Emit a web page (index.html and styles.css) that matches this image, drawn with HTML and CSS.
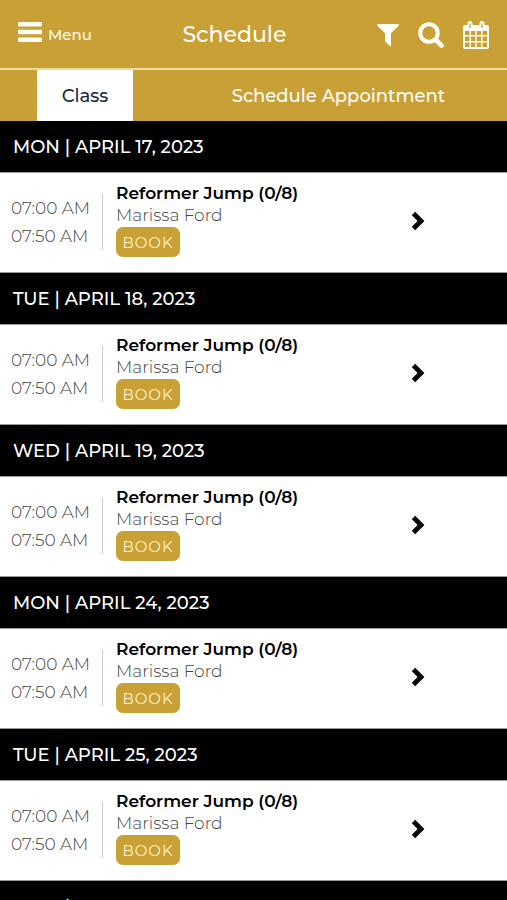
FILE: index.html
```html
<!DOCTYPE html>
<html lang="en">
<head>
<meta charset="utf-8">
<meta name="viewport" content="width=device-width, initial-scale=1">
<title>Schedule</title>
<link rel="stylesheet" href="styles.css">
</head>
<body>
<div class="app">
  <header class="topbar">
    <button class="menu" type="button">
      <svg width="24" height="20" viewBox="0 0 24 20" aria-hidden="true"><g fill="currentColor"><rect width="24" height="4.400" rx="1"/><rect y="7.800" width="24" height="4.400" rx="1"/><rect y="15.600" width="24" height="4.400" rx="1"/></g></svg>
      <span>Menu</span>
    </button>
    <h1 class="title">Schedule</h1>
    <div class="actions">
      <button class="icon" type="button" aria-label="Filter">
        <svg width="22" height="22" viewBox="0 0 22 22" aria-hidden="true"><path fill="currentColor" d="M1 0h20c1 0 1.300 1 .6 1.700L14 9.300V21c0 .9-.8 1.200-1.400.7l-4-3.800c-.4-.4-.6-.7-.6-1.200V9.300L.4 1.700C-.3 1 0 0 1 0z"/></svg>
      </button>
      <button class="icon" type="button" aria-label="Search">
        <svg width="26" height="26" viewBox="0 0 26 26" aria-hidden="true"><circle cx="11" cy="11" r="8.800" fill="none" stroke="currentColor" stroke-width="4"/><path d="M17.500 17.500l6 6" stroke="currentColor" stroke-width="4.600" stroke-linecap="round"/></svg>
      </button>
      <button class="icon" type="button" aria-label="Calendar">
        <svg width="26" height="28" viewBox="0 0 26 28" aria-hidden="true"><path fill="currentColor" fill-rule="evenodd" d="M2 4h2.500V2.500a2.500 2.500 0 0 1 5 0V4h7V2.500a2.500 2.500 0 0 1 5 0V4H24a2 2 0 0 1 2 2v20a2 2 0 0 1-2 2H2a2 2 0 0 1-2-2V6a2 2 0 0 1 2-2zM6.400 2.500v4.500h1.200V2.500zM18.400 2.500v4.500h1.200V2.500zM2 10v4h4.500v-4zM8 10v4h4.300v-4zM13.700 10v4H18v-4zM19.500 10v4H24v-4zM2 15.500v4.500h4.500v-4.500zM8 15.500v4.500h4.300v-4.500zM13.700 15.500v4.500H18v-4.500zM19.500 15.500v4.500H24v-4.500zM2 21.500V26h4.500v-4.500zM8 21.500V26h4.300v-4.500zM13.700 21.500V26H18v-4.500zM19.500 21.500V26H24v-4.500z"/></svg>
      </button>
    </div>
  </header>
  <nav class="tabs">
    <a class="tab tab-active" href="#class" aria-current="page">Class</a>
    <a class="tab" href="#appointment">Schedule Appointment</a>
  </nav>
  <main class="list">
    <section>
      <h2 class="day">MON | APRIL 17, 2023</h2>
      <div class="session">
        <div class="times"><time>07:00 AM</time><time>07:50 AM</time></div>
        <div class="info"><h3 class="name">Reformer Jump (0/8)</h3><p class="coach">Marissa Ford</p><button class="book" type="button">BOOK</button></div>
        <a class="more" href="#details" aria-label="Details"><svg width="14" height="20" viewBox="0 0 14 20" aria-hidden="true"><path d="M2.500 2.500L10 10l-7.500 7.500" fill="none" stroke="currentColor" stroke-width="4.800"/></svg></a>
      </div>
    </section>
    <section>
      <h2 class="day">TUE | APRIL 18, 2023</h2>
      <div class="session">
        <div class="times"><time>07:00 AM</time><time>07:50 AM</time></div>
        <div class="info"><h3 class="name">Reformer Jump (0/8)</h3><p class="coach">Marissa Ford</p><button class="book" type="button">BOOK</button></div>
        <a class="more" href="#details" aria-label="Details"><svg width="14" height="20" viewBox="0 0 14 20" aria-hidden="true"><path d="M2.500 2.500L10 10l-7.500 7.500" fill="none" stroke="currentColor" stroke-width="4.800"/></svg></a>
      </div>
    </section>
    <section>
      <h2 class="day">WED | APRIL 19, 2023</h2>
      <div class="session">
        <div class="times"><time>07:00 AM</time><time>07:50 AM</time></div>
        <div class="info"><h3 class="name">Reformer Jump (0/8)</h3><p class="coach">Marissa Ford</p><button class="book" type="button">BOOK</button></div>
        <a class="more" href="#details" aria-label="Details"><svg width="14" height="20" viewBox="0 0 14 20" aria-hidden="true"><path d="M2.500 2.500L10 10l-7.500 7.500" fill="none" stroke="currentColor" stroke-width="4.800"/></svg></a>
      </div>
    </section>
    <section>
      <h2 class="day">MON | APRIL 24, 2023</h2>
      <div class="session">
        <div class="times"><time>07:00 AM</time><time>07:50 AM</time></div>
        <div class="info"><h3 class="name">Reformer Jump (0/8)</h3><p class="coach">Marissa Ford</p><button class="book" type="button">BOOK</button></div>
        <a class="more" href="#details" aria-label="Details"><svg width="14" height="20" viewBox="0 0 14 20" aria-hidden="true"><path d="M2.500 2.500L10 10l-7.500 7.500" fill="none" stroke="currentColor" stroke-width="4.800"/></svg></a>
      </div>
    </section>
    <section>
      <h2 class="day">TUE | APRIL 25, 2023</h2>
      <div class="session">
        <div class="times"><time>07:00 AM</time><time>07:50 AM</time></div>
        <div class="info"><h3 class="name">Reformer Jump (0/8)</h3><p class="coach">Marissa Ford</p><button class="book" type="button">BOOK</button></div>
        <a class="more" href="#details" aria-label="Details"><svg width="14" height="20" viewBox="0 0 14 20" aria-hidden="true"><path d="M2.500 2.500L10 10l-7.500 7.500" fill="none" stroke="currentColor" stroke-width="4.800"/></svg></a>
      </div>
    </section>
    <section>
      <h2 class="day">WED | APRIL 26, 2023</h2>
    </section>
  </main>
</div>
</body>
</html>
```

FILE: styles.css
```css
* {
  box-sizing: border-box;
}

body,
h1,
h2,
h3,
p {
  margin: 0;
}

body {
  font-family: Montserrat, Inter, sans-serif;
  background: #fff;
  color: #000;
}

button {
  font: inherit;
  color: inherit;
  background: none;
  border: 0;
  padding: 0;
}

a {
  color: inherit;
  text-decoration: none;
}

svg {
  display: block;
}

.app {
  display: flex;
  flex-direction: column;
  height: 100vh;
}

.topbar {
  display: flex;
  justify-content: space-between;
  align-items: center;
  padding: 15px 18px 13px;
  background: #c9a036;
  color: #fffdf4;
  border-bottom: 2px solid #f0d998;
}

.menu {
  display: flex;
  align-items: center;
  gap: 6px;
  font-size: 15px;
  font-weight: 500;
  line-height: 20px;
  padding-bottom: 6px;
}

.menu span {
  padding-top: 6px;
}

.title {
  font-size: 22px;
  font-weight: 500;
  line-height: 40px;
}

.actions {
  display: flex;
  justify-content: flex-end;
  align-items: center;
  gap: 19px;
}

.tabs {
  display: flex;
  justify-content: space-around;
  background: #c9a036;
  color: #fffdf4;
}

.tab {
  padding: 14px 25px 13px;
  font-size: 18px;
  font-weight: 500;
  line-height: 24px;
}

.tab-active {
  background: #fff;
  color: #1d2b40;
}

.list {
  flex: 1;
  min-height: 0;
  overflow-y: auto;
  scrollbar-width: none;
}

.day {
  padding: 14px 13px 12px;
  font-size: 18px;
  font-weight: 500;
  line-height: 25px;
  background: #000;
  color: #fff;
}

.session {
  display: flex;
  align-items: flex-start;
  padding: 9px 82px 15px 11px;
  border-top: 1px solid #999;
  border-bottom: 1px solid #999;
}

.times {
  display: flex;
  flex-direction: column;
  width: 92px;
  margin-top: 12px;
  border-right: 1px solid #ccc;
  color: #444;
  font-size: 17px;
  font-weight: 300;
  line-height: 28px;
}

.info {
  flex: 1;
  padding-left: 13px;
}

.name {
  font-size: 17px;
  font-weight: 600;
  line-height: 22px;
}

.coach {
  color: #444;
  font-size: 17px;
  font-weight: 300;
  line-height: 22px;
}

.book {
  display: block;
  width: 64px;
  height: 30px;
  margin-top: 1px;
  border-radius: 7px;
  background: #c9a036;
  color: #fff3cf;
  font-size: 15px;
  font-weight: 400;
  letter-spacing: 1px;
}

.more {
  align-self: center;
  margin-top: 2px;
}
```
